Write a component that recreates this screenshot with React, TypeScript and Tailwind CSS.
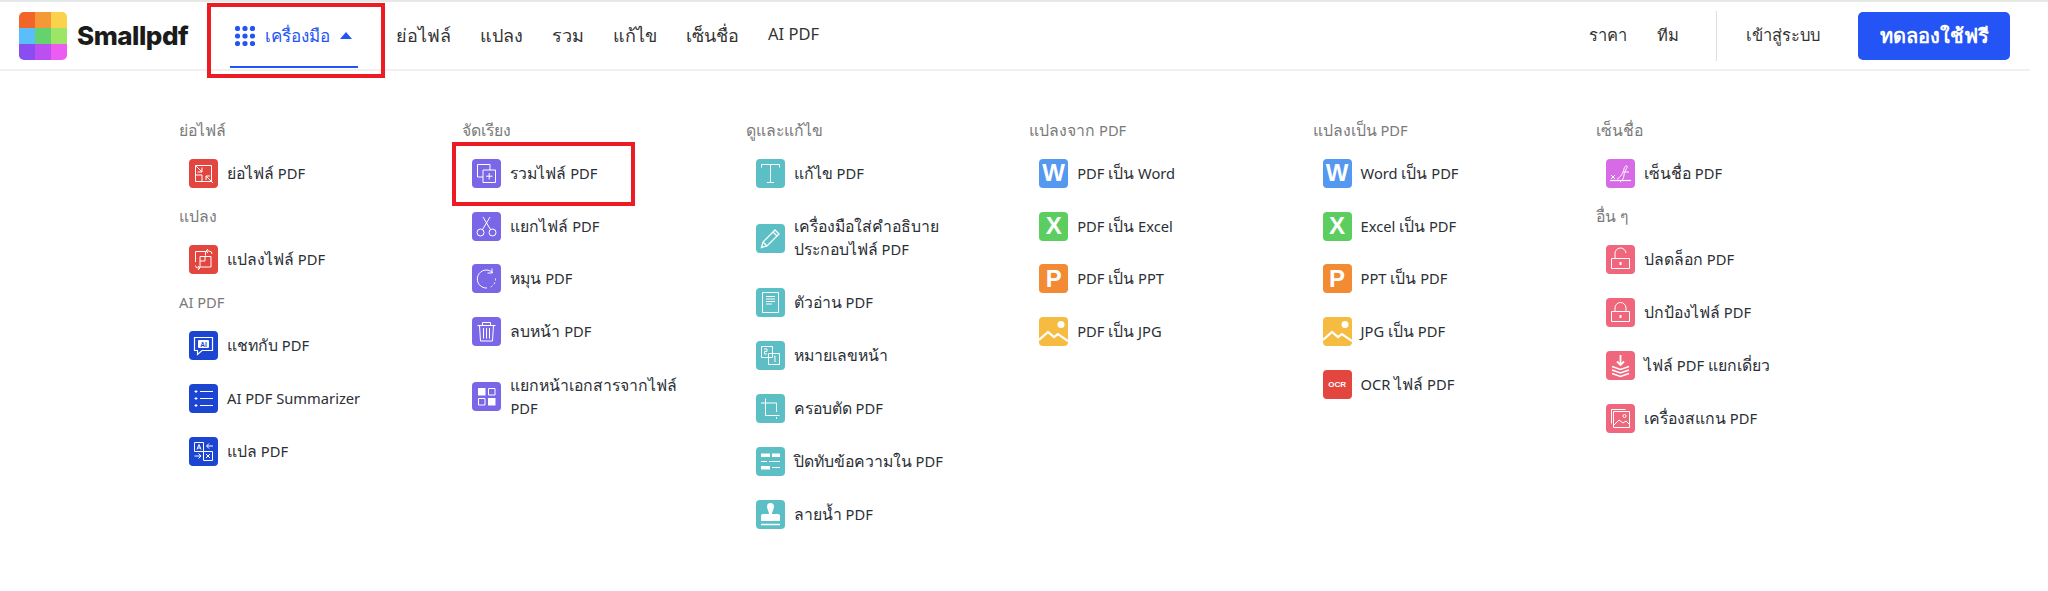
import type { ReactNode } from "react";

const RED = "bg-[#e2463f]";
const BLUE = "bg-[#1c46d1]";
const PURPLE = "bg-[#7a67e8]";
const TEAL = "bg-[#5bbfc5]";
const ROSE = "bg-[#f0667c]";

// Thai runs sit larger than the latin around them in this page
const Txt = ({ text, thai }: { text: string; thai: string }) => (
  <>
    {text.split(/([\u0E00-\u0E7F]+)/).map((part, i) =>
      i % 2 === 1 ? (
        <span key={i} className={thai}>
          {part}
        </span>
      ) : (
        part
      ),
    )}
  </>
);

const Tile = ({ color, children }: { color: string; children: ReactNode }) => (
  <span className={`flex h-[29px] w-[29px] shrink-0 items-center justify-center rounded-[4px] ${color}`}>
    <svg viewBox="0 0 29 29" className="h-[29px] w-[29px]" fill="none" stroke="#fff" strokeWidth="1">
      {children}
    </svg>
  </span>
);

const compress = (
  <Tile color={RED}>
    <path d="M6.500 16V6.500h16v16H13" />
    <path d="M7 7l6 6M13 8.500V13H8.500M24 24l-7-7M17 21v-4h4" />
    <path d="M6.500 16h6.500v6.500H6.500z" />
  </Tile>
);
const convert = (
  <Tile color={RED}>
    <path d="M6.500 17V6.500h10v4" />
    <path d="M11 11.500h11V22H11z" />
    <path d="M11 16h5M16 11.500V16" />
    <path d="M19 4l-2 2 2 2M17 6h3a3 3 0 0 1 3 3M9 25l2-2-2-2M11 23H9a2.500 2.500 0 0 1-2.500-2.500" />
  </Tile>
);
const chat = (
  <Tile color={BLUE}>
    <path d="M5.500 6.500h18v13H13l-4.500 4v-4h-3z" strokeWidth="1.200" />
    <rect x="9" y="9" width="11" height="8" rx="1" fill="#fff" stroke="none" />
    <text
      x="14.500"
      y="15.500"
      textAnchor="middle"
      fill="#1c46d1"
      stroke="none"
      fontSize="6.500"
      fontWeight="700"
      fontFamily="Liberation Sans"
    >
      AI
    </text>
  </Tile>
);
const summary = (
  <Tile color={BLUE}>
    <path d="M11 7.500h13M11 14.500h13M11 21.500h13" strokeWidth="1.200" />
    <path d="M5.500 7.500h3M7 6v3M5.500 14.500h3M7 13v3M5.500 21.500h3M7 20v3" />
  </Tile>
);
const translate = (
  <Tile color={BLUE}>
    <path d="M5.500 5.500h9v9h-9zM14.500 14.500h9v9h-9z" />
    <path d="M8 12.500l2-5 2 5M8.800 11h2.500M17 17l4 4M21 17l-4 4" />
    <path d="M18 9h6M20 6.500L17.500 9l2.500 2.500M5.500 19h6M9.500 16.500L12 19l-2.500 2.500" />
  </Tile>
);
const merge = (
  <Tile color={PURPLE}>
    <path d="M11 18H5.500V5.500H18V11" />
    <path d="M11 11h12.500v12.500H11zM17.200 14v6.500M14 17.200h6.500" />
  </Tile>
);
const scissors = (
  <Tile color={PURPLE}>
    <circle cx="8.500" cy="20.500" r="3.500" />
    <circle cx="20.500" cy="20.500" r="3.500" />
    <path d="M10.500 17.500L18 5M18.500 17.500L11 5" />
  </Tile>
);
const rotate = (
  <Tile color={PURPLE}>
    <path d="M21 9a9 9 0 1 0-6 15" />
    <path d="M23.500 14.500a9 9 0 0 1-6 9" strokeDasharray="2 2" />
    <path d="M20 4.500V9h-4.500" />
  </Tile>
);
const trash = (
  <Tile color={PURPLE}>
    <path d="M5.500 8.500h18M10.500 8.500V5.500h8v3M7.500 8.500l1 15.500h12l1-15.500M11.500 11v10.500M14.500 11v10.500M17.500 11v10.500" />
  </Tile>
);
const organize = (
  <Tile color={PURPLE}>
    <path d="M6 6h7.500v7.500H6z" fill="#fff" stroke="none" />
    <path d="M16.500 6.500h6.500v6.500h-6.500zM6.500 16.500h6.500v6.500H6.500z" />
    <path d="M16 16h7.500v7.500H16z" fill="#fff" stroke="none" />
  </Tile>
);
const editText = (
  <Tile color={TEAL}>
    <path d="M5.500 8.500V5.500h18v3M14.500 5.500v18M11 23.500h7" />
  </Tile>
);
const pencil = (
  <Tile color={TEAL}>
    <path d="M5.500 23.500l1.500-5.500L19 6l4 4-12 12z" strokeWidth="1.300" />
    <path d="M7 18l4 4M17 8l4 4" strokeWidth="1.300" />
  </Tile>
);
const preview = (
  <Tile color={TEAL}>
    <path d="M6.500 4.500h16v20h-16z" />
    <path d="M10 8.500h9M10 11h9M10 13.500h9M10 16h6" />
  </Tile>
);
const pageNumbers = (
  <Tile color={TEAL}>
    <path d="M5.500 5.500h11v11h-11zM12.500 12.500h11v11h-11z" />
    <path d="M8 8h3v2.500H8.500V13H11M18 15.500l1-.5v6" />
  </Tile>
);
const crop = (
  <Tile color={TEAL}>
    <path d="M9.500 4.500v17h14M5 9h15.500v9M20.500 23v2" />
  </Tile>
);
const redact = (
  <Tile color={TEAL}>
    <path d="M5 6.500h9v3.500H5zM5 19h9v3.500H5zM16 6.500h8v3.500h-8z" fill="#fff" stroke="none" />
    <path d="M5 14.500h6M13 14.500h11M16 20.500h8" />
  </Tile>
);
const stamp = (
  <Tile color={TEAL}>
    <path d="M5 24.500h19" strokeWidth="1.500" />
    <path
      d="M11 6.500a3.500 3.500 0 0 1 7 0c0 3-2 5-2 7.500h6a2 2 0 0 1 2 2v5H5v-5a2 2 0 0 1 2-2h6c0-2.500-2-4.500-2-7.500z"
      fill="#fff"
      stroke="none"
    />
  </Tile>
);
const letter = (color: string, l: string) => (
  <span
    className={`flex h-[29px] w-[29px] shrink-0 items-center justify-center rounded-[4px] font-['Liberation_Sans',sans-serif] text-[24px] leading-none font-bold text-white ${color}`}
  >
    {l}
  </span>
);
const word = letter("bg-[#5598f0]", "W");
const excel = letter("bg-[#5ccd5f]", "X");
const ppt = letter("bg-[#f38a34]", "P");
const jpg = (
  <Tile color="bg-[#f6bc41]">
    <circle cx="22" cy="7.500" r="3.500" fill="#fff" stroke="none" />
    <path d="M0 23l9-8 6 5 4-3 10 7" strokeWidth="2.200" />
  </Tile>
);
const ocr = (
  <span className="flex h-[29px] w-[29px] shrink-0 items-center justify-center rounded-[4px] bg-[#e2463f] font-['Liberation_Sans',sans-serif] text-[8px] leading-none font-bold text-white">
    OCR
  </span>
);
const sign = (
  <Tile color="bg-[#d76be5]">
    <path d="M4 21.500h21" strokeWidth="1.200" />
    <path d="M5 16l4 4M9 16l-4 4M11 20c3-1 6-6 7-10 .500-2 2-4 3-3s-3 6-3 9-2 6-4 7M17 13h6" />
  </Tile>
);
const unlock = (
  <Tile color={ROSE}>
    <path d="M5.500 13.500h18v10h-18z" />
    <path d="M9 13.500V9a5.500 5.500 0 0 1 11-1" />
    <path d="M14.500 17v3" strokeWidth="2" />
  </Tile>
);
const lock = (
  <Tile color={ROSE}>
    <path d="M5.500 13.500h18v10h-18z" />
    <path d="M9 13.500V10a5.500 5.500 0 0 1 11 0v3.500" />
    <path d="M14.500 17v3" strokeWidth="2" />
  </Tile>
);
const flatten = (
  <Tile color={ROSE}>
    <path d="M14.500 4v10M11 10.500l3.500 3.500 3.500-3.500" strokeWidth="1.800" />
    <path d="M6 15.500l8.500 3 8.500-3M6 19l8.500 3 8.500-3M6 22.500l8.500 3 8.500-3" strokeWidth="1.500" />
  </Tile>
);
const scanner = (
  <Tile color={ROSE}>
    <path d="M5.500 19.500V5.500h14M7.500 7.500h16v16h-16z" />
    <path d="M8 21l5-5 4 3 3-2 3 3" />
    <circle cx="18.500" cy="12" r="1.500" />
  </Tile>
);

type Item = { icon: ReactNode; text: string; tall?: boolean; marked?: boolean };
type Section = { title: string; items: Item[] };

const columns: Section[][] = [
  [
    { title: "ย่อไฟล์", items: [{ icon: compress, text: "ย่อไฟล์ PDF" }] },
    { title: "แปลง", items: [{ icon: convert, text: "แปลงไฟล์ PDF" }] },
    {
      title: "AI PDF",
      items: [
        { icon: chat, text: "แชทกับ PDF" },
        { icon: summary, text: "AI PDF Summarizer" },
        { icon: translate, text: "แปล PDF" },
      ],
    },
  ],
  [
    {
      title: "จัดเรียง",
      items: [
        { icon: merge, text: "รวมไฟล์ PDF", marked: true },
        { icon: scissors, text: "แยกไฟล์ PDF" },
        { icon: rotate, text: "หมุน PDF" },
        { icon: trash, text: "ลบหน้า PDF" },
        { icon: organize, text: "แยกหน้าเอกสารจากไฟล์ PDF", tall: true },
      ],
    },
  ],
  [
    {
      title: "ดูและแก้ไข",
      items: [
        { icon: editText, text: "แก้ไข PDF" },
        { icon: pencil, text: "เครื่องมือใส่คำอธิบาย ประกอบไฟล์ PDF", tall: true },
        { icon: preview, text: "ตัวอ่าน PDF" },
        { icon: pageNumbers, text: "หมายเลขหน้า" },
        { icon: crop, text: "ครอบตัด PDF" },
        { icon: redact, text: "ปิดทับข้อความใน PDF" },
        { icon: stamp, text: "ลายน้ำ PDF" },
      ],
    },
  ],
  [
    {
      title: "แปลงจาก PDF",
      items: [
        { icon: word, text: "PDF เป็น Word" },
        { icon: excel, text: "PDF เป็น Excel" },
        { icon: ppt, text: "PDF เป็น PPT" },
        { icon: jpg, text: "PDF เป็น JPG" },
      ],
    },
  ],
  [
    {
      title: "แปลงเป็น PDF",
      items: [
        { icon: word, text: "Word เป็น PDF" },
        { icon: excel, text: "Excel เป็น PDF" },
        { icon: ppt, text: "PPT เป็น PDF" },
        { icon: jpg, text: "JPG เป็น PDF" },
        { icon: ocr, text: "OCR ไฟล์ PDF" },
      ],
    },
  ],
  [
    { title: "เซ็นชื่อ", items: [{ icon: sign, text: "เซ็นชื่อ PDF" }] },
    {
      title: "อื่น ๆ",
      items: [
        { icon: unlock, text: "ปลดล็อก PDF" },
        { icon: lock, text: "ปกป้องไฟล์ PDF" },
        { icon: flatten, text: "ไฟล์ PDF แยกเดี่ยว" },
        { icon: scanner, text: "เครื่องสแกน PDF" },
      ],
    },
  ],
];

const logoColors = [
  "bg-[#f26528]",
  "bg-[#f49838]",
  "bg-[#fad24c]",
  "bg-[#5bbdf9]",
  "bg-[#64d26e]",
  "bg-[#9ce567]",
  "bg-[#8a4ef0]",
  "bg-[#bb4ff0]",
  "bg-[#ec5cf0]",
];

const navLinks = ["ย่อไฟล์", "แปลง", "รวม", "แก้ไข", "เซ็นชื่อ", "AI PDF"];

const Row = ({ item }: { item: Item }) => (
  <div className={`relative flex items-center gap-[9px] pl-[10px] ${item.tall ? "h-[76.800px]" : "h-[52.800px]"}`}>
    {item.icon}
    <span className="w-[180px] text-[14.700px] leading-[23px] text-[#2b2f36]">
      <Txt text={item.text} thai="text-[15.800px]" />
    </span>
    {item.marked && (
      <div className="absolute top-[-5px] left-[-10px] h-[64px] w-[183px] border-4 border-[#ed1c24]" />
    )}
  </div>
);

export default function App() {
  return (
    <div className="h-[591px] w-full overflow-hidden bg-white font-['Noto_Sans',sans-serif]">
      <div className="h-[2px] bg-[#e4e8e6]" />
      <header className="flex h-[69px] w-[2030px] items-center border-b-2 border-[#f1f1f1] pr-[20px] pl-[19px]">
        <div className="flex w-[211px] items-center gap-[10px]">
          <div className="grid h-[48px] w-[48px] grid-cols-3 grid-rows-3 overflow-hidden rounded-[5px]">
            {logoColors.map((c) => (
              <span key={c} className={c} />
            ))}
          </div>
          <span className="font-['Inter',sans-serif] text-[26px] font-extrabold tracking-[-0.5px] text-[#1b1b1b]">
            Smallpdf
          </span>
        </div>
        <div className="relative flex h-full w-[128px] items-center gap-[10px] pl-[5px] text-[#2454f5]">
          <svg viewBox="0 0 20 20" className="h-[20px] w-[20px]" fill="#2454f5">
            {[2.5, 10, 17.5].flatMap((y) =>
              [2.5, 10, 17.5].map((x) => <circle key={`${x}-${y}`} cx={x} cy={y} r="2.600" />),
            )}
          </svg>
          <span className="text-[17px]">เครื่องมือ</span>
          <svg viewBox="0 0 12 7" className="h-[7px] w-[12px]" fill="#2454f5">
            <path d="M6 0l6 7H0z" />
          </svg>
          <div className="absolute right-0 bottom-[1px] left-0 h-[2px] bg-[#2454f5]" />
          <div className="absolute top-[1px] right-[-27px] left-[-23px] h-[75px] border-4 border-[#ed1c24]" />
        </div>
        <nav className="ml-[38px] flex gap-[29px] text-[16.500px] text-[#333]">
          {navLinks.map((l) => (
            <span key={l}>
              <Txt text={l} thai="text-[18px]" />
            </span>
          ))}
        </nav>
        <div className="ml-auto flex items-center text-[16.500px] text-[#333]">
          <span>ราคา</span>
          <span className="ml-[30px]">ทีม</span>
          <div className="mr-[29px] ml-[37px] h-[50px] w-px bg-[#dedede]" />
          <span>เข้าสู่ระบบ</span>
          <button className="ml-[38px] h-[48px] w-[152px] rounded-[5px] bg-[#2454f5] text-[20px] font-bold text-white">
            ทดลองใช้ฟรี
          </button>
        </div>
      </header>
      <main className="flex pt-[42.500px] pl-[179px]">
        {columns.map((col, i) => (
          <div key={i} className="w-[283.400px]">
            {col.map((section) => (
              <section key={section.title}>
                <div className="h-[33.500px] text-[14.700px] leading-[33px] text-[#7a7a7a]">
                  <Txt text={section.title} thai="text-[15.800px]" />
                </div>
                {section.items.map((item) => (
                  <Row key={item.text} item={item} />
                ))}
              </section>
            ))}
          </div>
        ))}
      </main>
    </div>
  );
}
